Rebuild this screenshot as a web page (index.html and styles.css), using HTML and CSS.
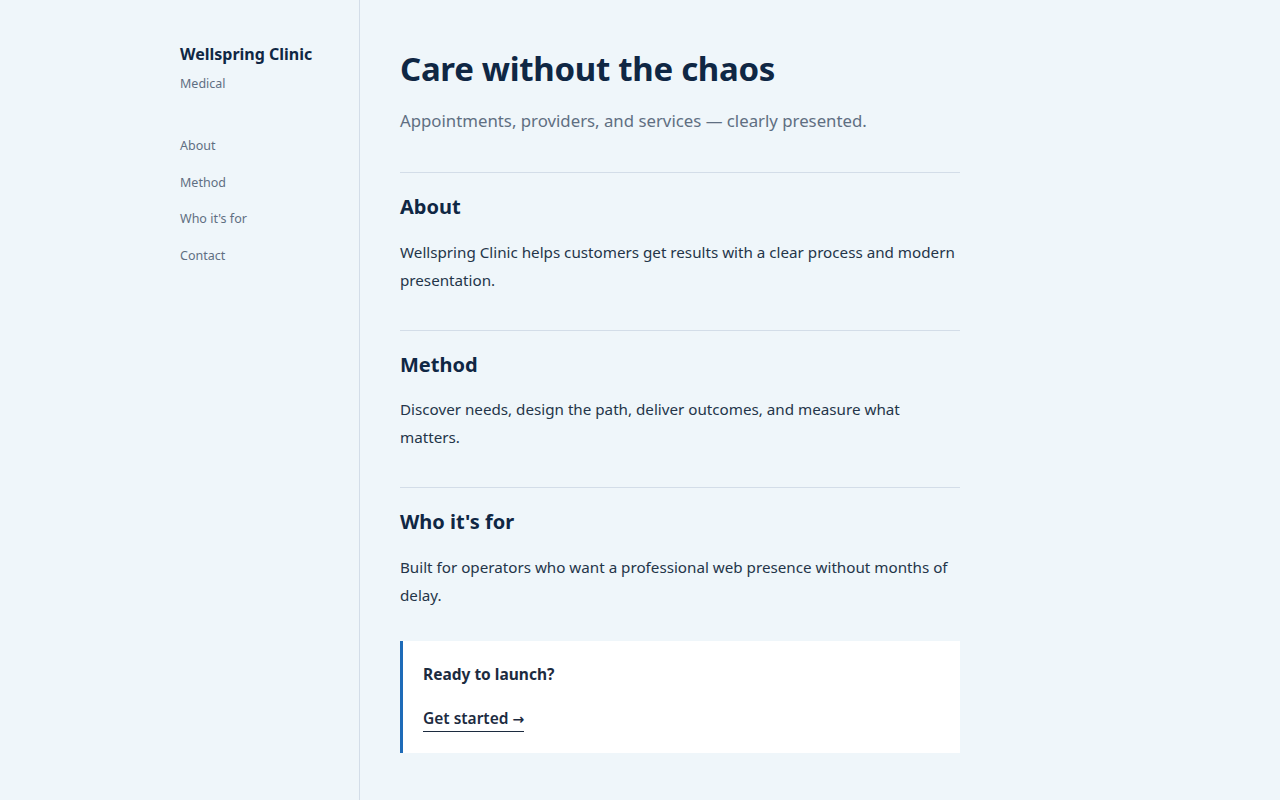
FILE: index.html
```html
<!DOCTYPE html>
<html lang="en">
<head>
    <meta charset="UTF-8">
    <title>Wellspring Clinic</title>
    <link rel="stylesheet" href="styles.css">
</head>
<body>
    <div class="layout">
        <aside class="sidebar">
            <div class="brand">Wellspring Clinic</div>
            <div class="brand-sub">Medical</div>
            <nav class="side-nav">
                <a href="#about">About</a>
                <a href="#method">Method</a>
                <a href="#who">Who it's for</a>
                <a href="#contact">Contact</a>
            </nav>
        </aside>

        <main class="content">
            <header class="hero">
                <h1>Care without the chaos</h1>
                <p class="lead">Appointments, providers, and services — clearly presented.</p>
            </header>

            <section id="about" class="block">
                <h2>About</h2>
                <p>Wellspring Clinic helps customers get results with a clear process and modern presentation.</p>
            </section>

            <section id="method" class="block">
                <h2>Method</h2>
                <p>Discover needs, design the path, deliver outcomes, and measure what matters.</p>
            </section>

            <section id="who" class="block block-last">
                <h2>Who it's for</h2>
                <p>Built for operators who want a professional web presence without months of delay.</p>
            </section>

            <section id="contact" class="callout">
                <div class="callout-title">Ready to launch?</div>
                <a href="#" class="callout-link">Get started <span class="arrow">→</span></a>
            </section>
        </main>
    </div>
</body>
</html>
```

FILE: styles.css
```css
*{
    padding: 0;
    margin: 0;
    box-sizing: border-box;
}
body{
    background-color: #eff6fa;
    color: #1c2b3f;
    font-family: "Noto Sans", "Open Sans", sans-serif;
}
a{
    text-decoration: none;
    color: inherit;
}
.layout{
    display: flex;
    min-height: 800px;
}
.sidebar{
    width: 360px;
    flex: 0 0 360px;
    border-right: 1px solid #d3dde8;
    padding: 42px 0 0 180px;
}
.brand{
    font-size: 16px;
    font-weight: 700;
    color: #0f2744;
    line-height: 24px;
}
.brand-sub{
    font-size: 12.5px;
    color: #5f6f82;
    margin-top: 9px;
    line-height: 18px;
}
.side-nav{
    margin-top: 44px;
    display: flex;
    flex-direction: column;
    gap: 18.7px;
    a{
        font-size: 12.5px;
        line-height: 18px;
        color: #5f6f82;
    }
}
.content{
    width: 600px;
    padding: 46px 0 40px 40px;
}
.hero{
    padding-bottom: 38px;
    border-bottom: 1px solid #d3dde8;
    h1{
        font-size: 33px;
        line-height: 46px;
        font-weight: 700;
        color: #0f2744;
        letter-spacing: -0.3px;
    }
    .lead{
        margin-top: 16px;
        font-size: 16.8px;
        line-height: 26px;
        color: #5f6f82;
    }
}
.block{
    padding: 20px 0 36px;
    border-bottom: 1px solid #d3dde8;
    h2{
        font-size: 20px;
        line-height: 28px;
        font-weight: 700;
        color: #0f2744;
    }
    p{
        margin-top: 16.7px;
        font-size: 15.2px;
        line-height: 28px;
        color: #243549;
    }
}
.block-last{
    border-bottom: none;
    padding-bottom: 32px;
}
.callout{
    background-color: #ffffff;
    border-left: 3px solid #1e6bb8;
    padding: 21px 20px 21px 20px;
    display: flex;
    flex-direction: column;
    align-items: flex-start;
    gap: 20px;
    .callout-title{
        font-size: 15.5px;
        font-weight: 700;
        line-height: 24px;
        color: #1c2b3f;
    }
    .callout-link{
        font-size: 15.5px;
        font-weight: 600;
        line-height: 24px;
        color: #1c2b3f;
        border-bottom: 1px solid #1c2b3f;
    }
    .arrow{
        font-family: "DejaVu Sans", sans-serif;
        font-weight: 700;
        font-size: 14px;
    }
}
```
